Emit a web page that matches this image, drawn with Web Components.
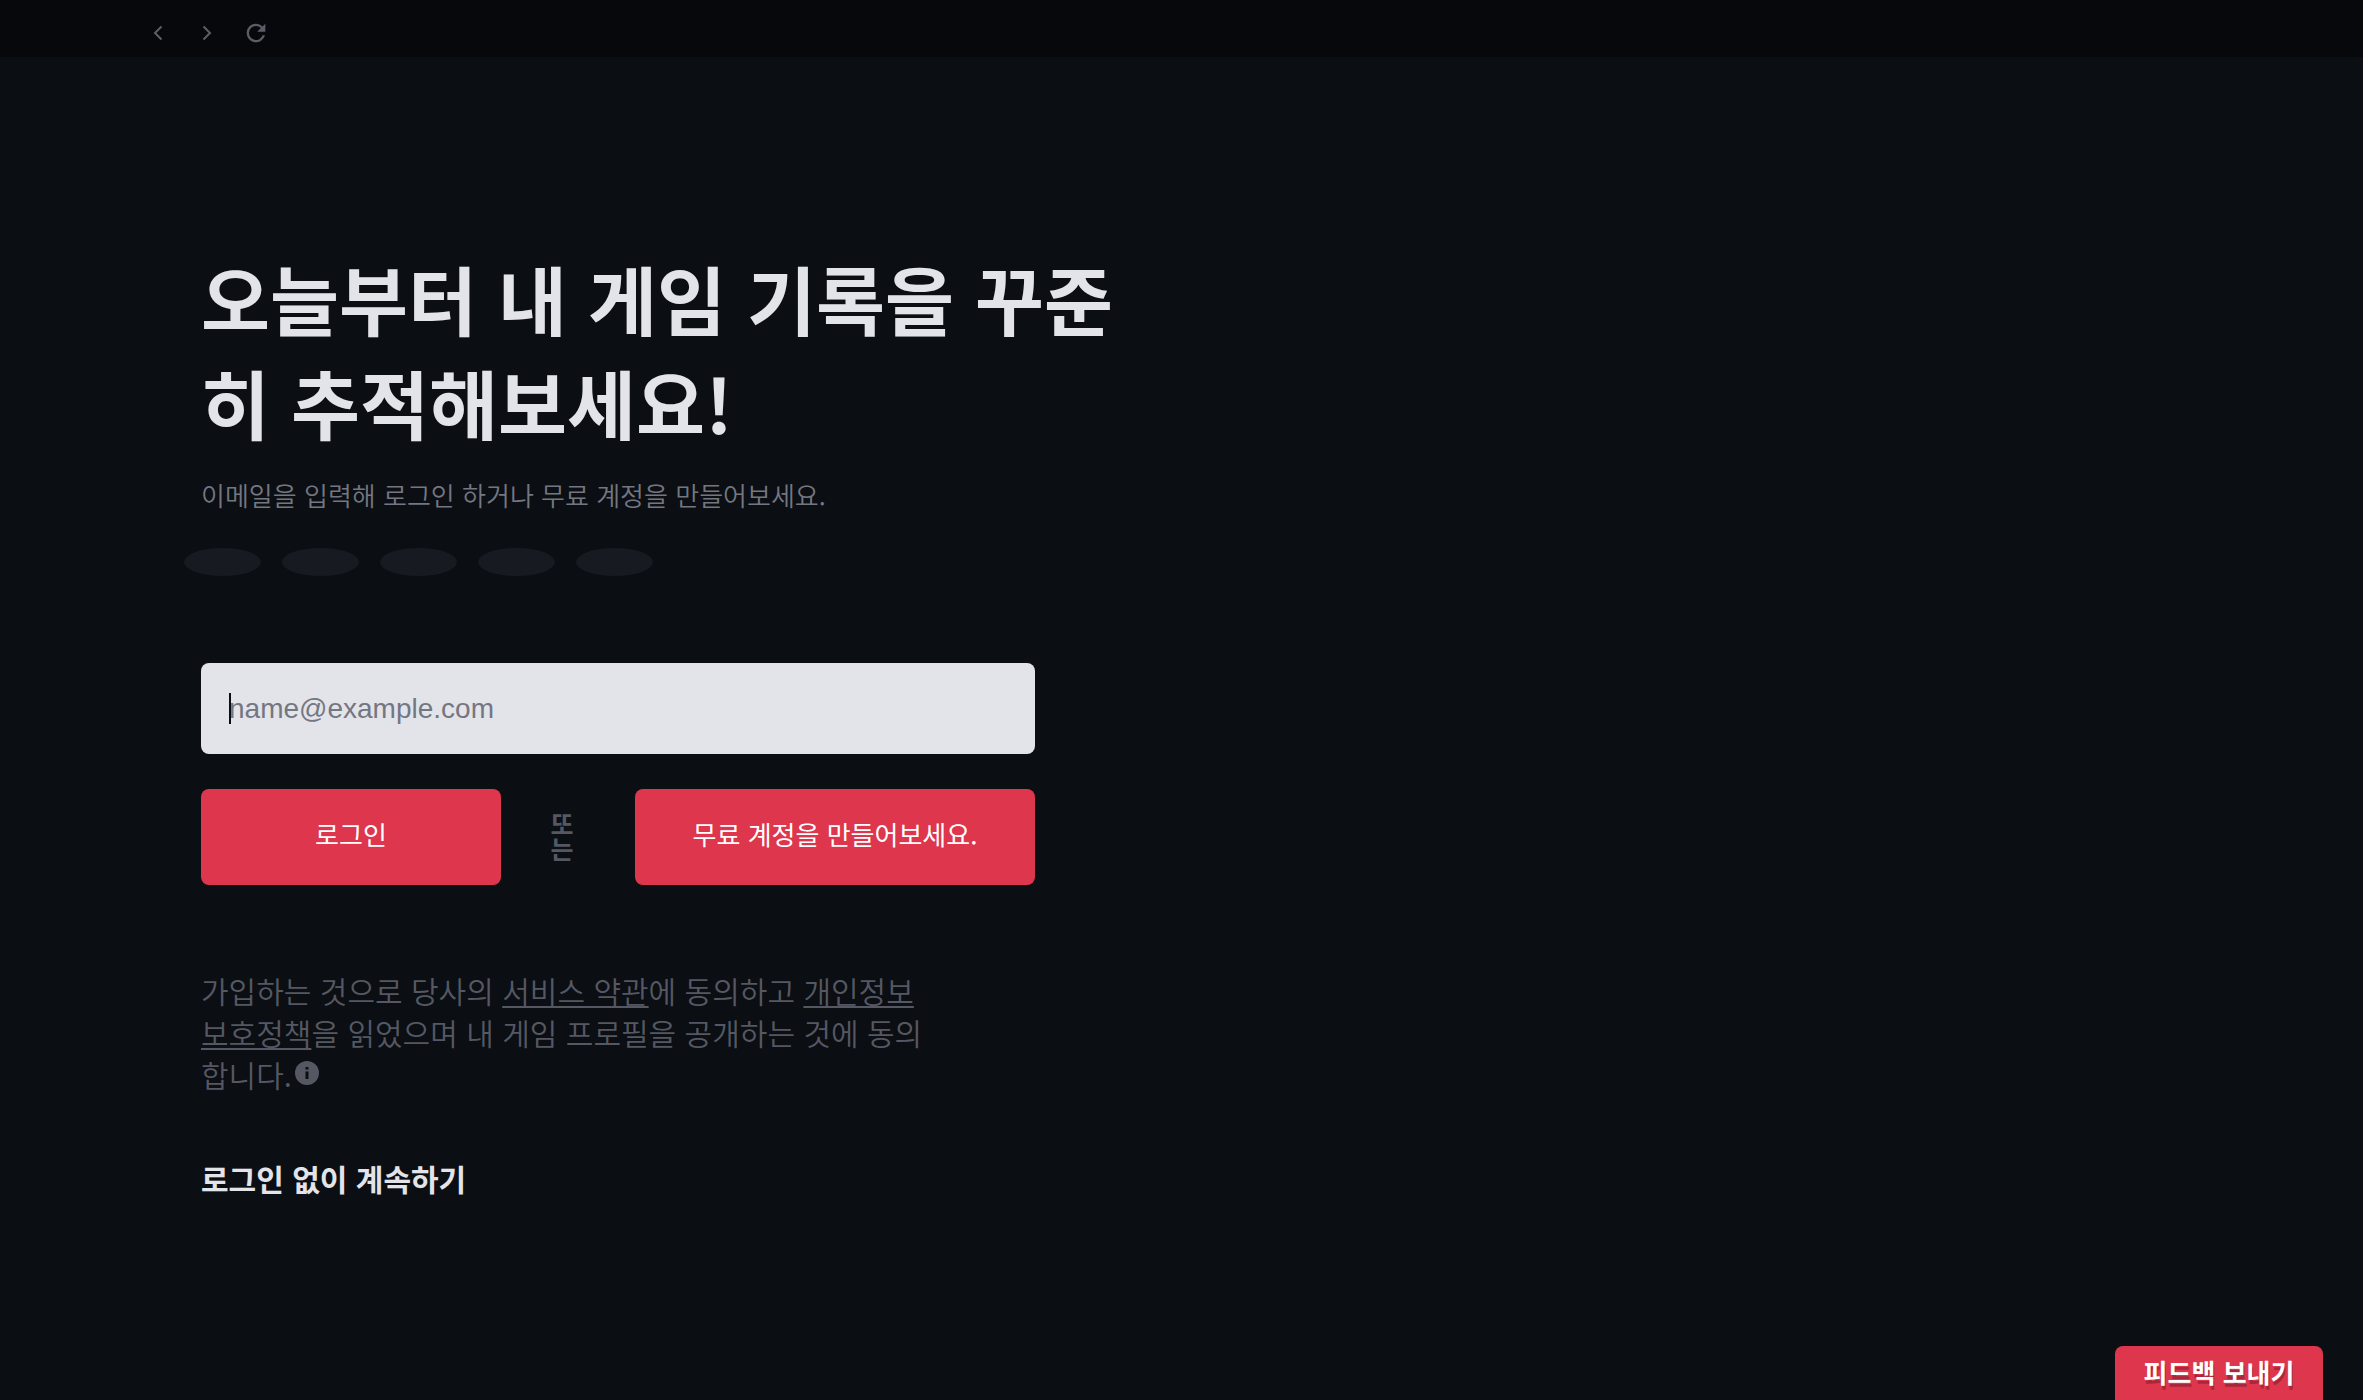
<!DOCTYPE html>
<html lang="ko">
<head>
<meta charset="utf-8">
<meta name="viewport" content="width=device-width, initial-scale=1">
<title>로그인</title>
<style>
  html, body { margin: 0; height: 100%; }
  body {
    background: #0b0e13;
    color: #e2e4ea;
    font-family: "Noto Sans CJK KR", sans-serif;
    --accent: #de364c;
    --muted: #747781;
    --dim: #555862;
  }
</style>
</head>
<body>
<login-page></login-page>
<script>
const define = (name, html) => {
  const template = document.createElement('template');
  template.innerHTML = '<style>*{box-sizing:border-box}</style>' + html;
  customElements.define(name, class extends HTMLElement {
    constructor() {
      super();
      this.attachShadow({ mode: 'open' }).append(template.content.cloneNode(true));
    }
  });
};

define('nav-bar', `
<style>
  :host { display: flex; align-items: center; gap: 17px; height: 57px; padding: 8px 0 0 142px; background: #07080c; }
  button { display: flex; align-items: center; justify-content: center; width: 32px; height: 32px; border: 0; padding: 0; background: none; color: #5b5e69; }
  svg { flex: none; width: 24px; height: 24px; display: block; }
  .reload { width: 28px; height: 28px; }
</style>
<button aria-label="뒤로"><svg viewBox="0 0 24 24" fill="none" stroke="currentColor" stroke-width="2"><path d="M15.500 5.500L9 12l6.500 6.500"/></svg></button>
<button aria-label="앞으로"><svg viewBox="0 0 24 24" fill="none" stroke="currentColor" stroke-width="2"><path d="M8.500 5.500L15 12l-6.500 6.500"/></svg></button>
<button aria-label="새로고침"><svg class="reload" viewBox="0 0 24 24" fill="currentColor"><path d="M17.65 6.35A7.96 7.96 0 0 0 12 4a8 8 0 1 0 7.73 10h-2.08A6 6 0 1 1 12 6c1.66 0 3.14.69 4.22 1.78L13 11h7V4z"/></svg></button>`);

define('step-dots', `
<style>
  :host { display: flex; gap: 21px; }
  i { width: 77px; height: 28px; border-radius: 50%; background: #171a21; }
</style>
<i></i><i></i><i></i><i></i><i></i>`);

define('action-button', `
<style>
  :host { display: block; }
  button { width: 100%; height: 96px; padding: 0 0 6px; border: 0; border-radius: 8px; background: var(--accent); color: #fff; font: 400 26px/40px "Noto Sans CJK KR", sans-serif; }
</style>
<button><slot></slot></button>`);

define('email-field', `
<style>
  :host { display: block; position: relative; }
  input { display: block; width: 100%; height: 91px; border: 0; border-radius: 8px; outline: 0; padding: 0 28px; background: #e2e4ea; color: #0b0e13; caret-color: transparent; font: 28px "Liberation Sans", sans-serif; }
  input::placeholder { color: #747781; opacity: 1; }
  .caret { position: absolute; left: 28px; top: 30px; width: 2px; height: 31px; background: #0b0e13; }
  input:not(:placeholder-shown) + .caret { display: none; }
</style>
<input type="email" aria-label="이메일" placeholder="name@example.com"><span class="caret"></span>`);

define('info-icon', `
<style>
  :host { display: inline-block; width: 24px; height: 24px; margin-left: 3px; vertical-align: 2px; }
  svg { display: block; width: 100%; height: 100%; }
</style>
<svg viewBox="0 0 24 24"><circle cx="12" cy="12" r="12" fill="#555862"/><path d="M10.500 6h3v2.500h-3zM10.500 10.500h3v7.500h-3z" fill="#0b0e13"/></svg>`);

define('login-form', `
<style>
  :host { display: block; }
  form { display: flex; flex-direction: column; gap: 35px; }
  .row { display: grid; grid-template-columns: 300fr 134fr 400fr; align-items: center; }
  .or { justify-self: center; padding-right: 12px; writing-mode: vertical-rl; text-orientation: upright; font-size: 25px; line-height: 30px; font-weight: 700; color: var(--dim); }
</style>
<form onsubmit="return false">
  <email-field></email-field>
  <div class="row">
    <action-button>로그인</action-button>
    <span class="or">또는</span>
    <action-button>무료 계정을 만들어보세요.</action-button>
  </div>
</form>`);

define('feedback-tab', `
<style>
  :host { display: block; position: fixed; right: 40px; bottom: 0; }
  button { width: 208px; height: 54px; border: 0; border-radius: 8px 8px 0 0; padding: 0 0 2px; background: var(--accent); color: #fff; font: 700 26px/40px "Noto Sans CJK KR", sans-serif; text-shadow: 1px 4px 0 rgba(0,0,0,.25); }
</style>
<button>피드백 보내기</button>`);

define('login-page', `
<style>
  :host { display: flex; flex-direction: column; min-height: 100vh; border-bottom: 6px solid #07080c; }
  main { width: 40%; padding: 189px 0 0 201px; box-sizing: content-box; }
  h1 { margin: 0; font-size: 75px; line-height: 104px; font-weight: 700; word-break: break-all; }
  .lead { margin: 21px 0 0; font-size: 26px; line-height: 40px; font-weight: 350; color: var(--muted); }
  step-dots { margin: 33px 0 0 -17px; }
  .narrow { max-width: 834px; }
  login-form { margin-top: 87px; }
  .terms { margin: 84px 0 0; max-width: 730px; font-size: 30px; line-height: 42px; font-weight: 350; color: var(--dim); word-break: break-all; }
  .terms a { color: inherit; text-underline-offset: 3px; text-decoration-thickness: 2px; }
  .skip { display: inline-block; margin-top: 62px; font-size: 30px; line-height: 42px; font-weight: 700; color: #e2e4ea; text-decoration: none; }
</style>
<nav-bar></nav-bar>
<main>
  <h1>오늘부터 내 게임 기록을 꾸준히 추적해보세요!</h1>
  <p class="lead">이메일을 입력해 로그인 하거나 무료 계정을 만들어보세요.</p>
  <step-dots></step-dots>
  <div class="narrow">
    <login-form></login-form>
    <p class="terms">가입하는 것으로 당사의 <a href="#terms">서비스 약관</a>에 동의하고 <a href="#privacy">개인정보 보호정책</a>을 읽었으며 내 게임 프로필을 공개하는 것에 동의합니다.<info-icon></info-icon></p>
    <a class="skip" href="#skip">로그인 없이 계속하기</a>
  </div>
</main>
<feedback-tab></feedback-tab>`);
</script>
</body>
</html>
